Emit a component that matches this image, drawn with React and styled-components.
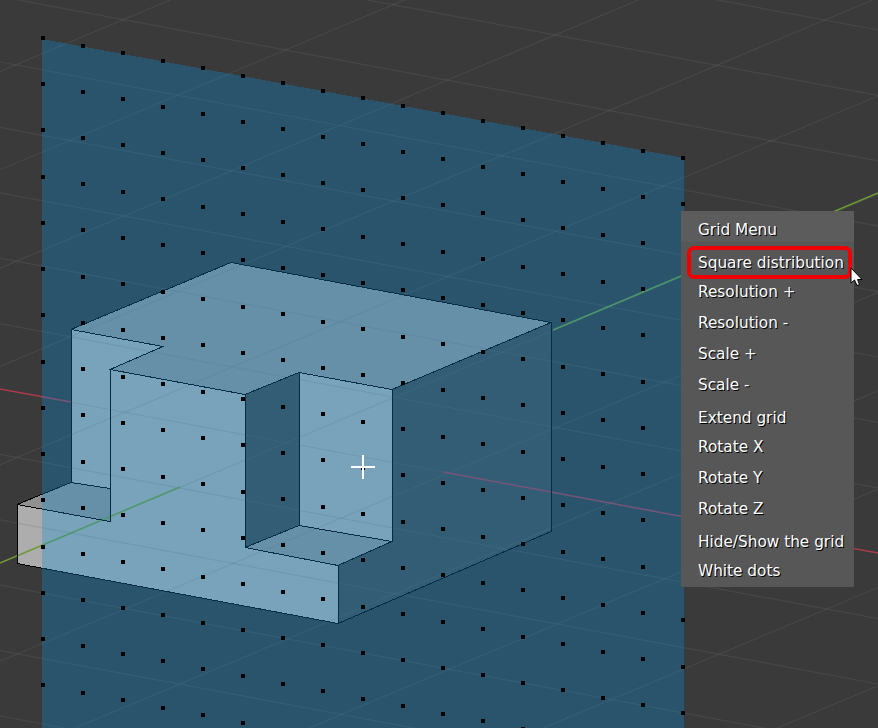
import React from 'react';
import styled, { createGlobalStyle } from 'styled-components';

const GlobalStyle = createGlobalStyle`
  html, body {
    margin: 0;
    padding: 0;
    background: #3a3a3a;
    overflow: hidden;
  }
`;

const Viewport = styled.div`
  position: relative;
  width: 878px;
  height: 728px;
  overflow: hidden;
  background: #3a3a3a;
`;

const Scene = styled.svg`
  display: block;
  width: 878px;
  height: 728px;
`;

const Menu = styled.div`
  position: absolute;
  left: 681px;
  top: 211px;
  width: 173px;
  height: 376px;
  background: #575757;
  font-family: "DejaVu Sans", sans-serif;
  font-size: 15.3px;
  color: #fff;
  text-shadow: 1px 1px 0 #000;
`;

const MenuHeader = styled.div`
  height: 31px;
  padding: 8px 0 0 17px;
  box-sizing: border-box;
  background: #5c5c5c;
  line-height: 22px;
`;

const MenuList = styled.div`
  display: flex;
  flex-direction: column;
  padding: 10px 0 0 17px;
`;

const MenuRow = styled.div`
  position: relative;
  height: 22px;
  line-height: 22px;
  white-space: nowrap;
  margin-top: ${(p) => p.$gap || 0}px;

  ${(p) =>
    p.$marked &&
    `
    &::after {
      content: '';
      position: absolute;
      left: -11px;
      top: -6px;
      width: 165px;
      height: 33px;
      box-sizing: border-box;
      border: 4px solid #f00000;
      border-radius: 7px;
    }
  `}
`;

const Pointer = styled.svg`
  position: absolute;
  left: 850px;
  top: 267px;
  width: 14px;
  height: 20px;
`;

const items = [
  ['Square distribution', 0],
  ['Resolution +', 7],
  ['Resolution -', 9],
  ['Scale +', 9],
  ['Scale -', 9],
  ['Extend grid', 11],
  ['Rotate X', 7],
  ['Rotate Y', 9],
  ['Rotate Z', 9],
  ['Hide/Show the grid', 11],
  ['White dots', 7],
];

const faces = [
  // right side, dark
  { fill: '#464646', points: '392,389 551,322 551,531 338,623 338,565 392,541' },
  // recess side
  { fill: '#464646', points: '245,394 300,372 300,525 245,547' },
  // upper surfaces
  { fill: '#909090', points: '72,329 231,262 551,322 392,389 300,372 245,394 110,369 163,346' },
  { fill: '#909090', points: '245,547 300,525 392,541 338,565' },
  { fill: '#909090', points: '17,504 72,482 110,488 110,521' },
  // front surfaces
  { fill: '#adadad', points: '72,329 163,346 110,369 110,488 72,482' },
  { fill: '#adadad', points: '300,372 392,389 392,541 300,525' },
  { fill: '#adadad', points: '110,369 245,394 245,547 338,565 338,623 17,563 17,504 110,521' },
];

const edges = [
  '71,329 231,262 551,322 551,531 338,623 17,563 17,504 71,482 71,329',
  '71,329 163,346 110,369 245,394 299,372 392,389 551,322',
  '110,369 110,521 17,504',
  '71,482 110,488',
  '245,394 245,547 338,565 338,623',
  '299,372 299,525 392,541 392,389',
  '245,547 299,525',
  '338,565 392,541',
];

// floor grid, two families of lines
const GridLines = () => {
  const lines = [];
  for (let k = -3; k <= 11; k++) {
    const y = 62 + 65.4 * k;
    lines.push(<line key={'a' + k} x1="0" y1={y} x2="878" y2={y + 878 * 0.187} />);
  }
  for (let k = -5; k <= 6; k++) {
    const y = 563 + 98.3 * k;
    lines.push(<line key={'b' + k} x1="0" y1={y} x2="878" y2={y - 878 * 0.42} />);
  }
  return (
    <g stroke="rgb(112,112,112)" strokeOpacity="0.25" strokeWidth="1.2">
      {lines}
    </g>
  );
};

const Dots = () => {
  const dots = [];
  for (let c = 0; c <= 16; c++) {
    for (let r = 0; r <= 15; r++) {
      const x = 43 + c * 40;
      const y = Math.round(38 + c * 7.5 + r * 46.23);
      dots.push(<rect key={c + '-' + r} x={x - 2} y={y - 2} width="4" height="4" />);
    }
  }
  return <g fill="#000">{dots}</g>;
};

export default function App() {
  return (
    <Viewport>
      <GlobalStyle />
      <Scene viewBox="0 0 878 728">
        <g shapeRendering="crispEdges">
          {faces.map((f) => (
            <polygon key={f.points} points={f.points} fill={f.fill} />
          ))}
        </g>
        <GridLines />
        <g strokeWidth="1.5">
          <line x1="0" y1="563" x2="180" y2="487" stroke="#6f9a35" />
          <line x1="553" y1="330" x2="878" y2="193" stroke="#6f9a35" />
          <line x1="0" y1="389" x2="71" y2="402" stroke="#a83a4a" />
          <line x1="443" y1="472" x2="878" y2="553" stroke="#a83a4a" />
        </g>
        <g
          fill="none"
          stroke="#000"
          strokeWidth="1"
          shapeRendering="crispEdges"
          transform="translate(0 0.5)"
        >
          {edges.map((e) => (
            <polyline key={e} points={e} />
          ))}
        </g>
        <polygon
          points="42,39 684,158 684,728 42,728"
          fill="rgb(10,144,221)"
          fillOpacity="0.313"
          shapeRendering="crispEdges"
        />
        <g shapeRendering="crispEdges">
          <Dots />
          <rect x="351" y="466" width="24" height="2" fill="#fff" />
          <rect x="362" y="455" width="2" height="24" fill="#fff" />
        </g>
      </Scene>
      <Menu>
        <MenuHeader>Grid Menu</MenuHeader>
        <MenuList>
          {items.map(([label, gap], i) => (
            <MenuRow key={label} $gap={gap} $marked={i === 0}>
              {label}
            </MenuRow>
          ))}
        </MenuList>
      </Menu>
      <Pointer viewBox="0 0 14 20">
        <path
          d="M1 1 L1 16 L4.5 13 L7 18.5 L9.5 17.5 L7.5 12.5 L12 12.5 Z"
          fill="#fff"
          stroke="#000"
          strokeWidth="1"
        />
      </Pointer>
    </Viewport>
  );
}
